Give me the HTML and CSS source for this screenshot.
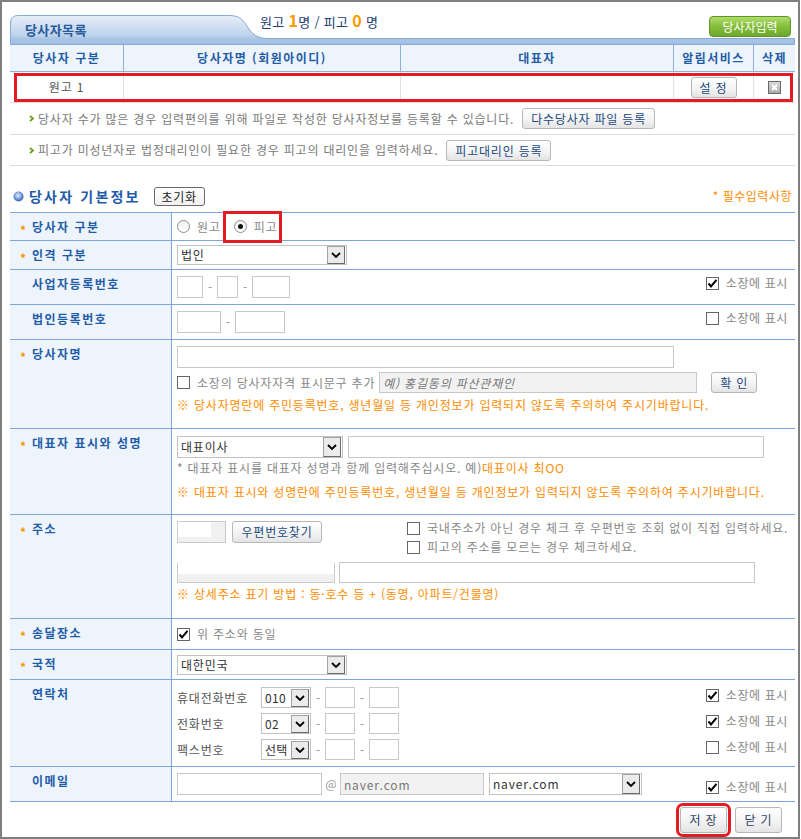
FILE: index.html
```html
<!DOCTYPE html>
<html lang="ko">
<head>
<meta charset="utf-8">
<title>당사자목록</title>
<link rel="stylesheet" href="styles.css">
</head>
<body>
<div class="window">

  <!-- list tab + counts -->
  <div class="list-head">
    <svg class="tab-bg" width="785" height="31" viewBox="0 0 785 31">
      <defs>
        <linearGradient id="tabFill" x1="0" y1="0" x2="0" y2="1">
          <stop offset="0" stop-color="#e6eff9"/>
          <stop offset="0.7" stop-color="#bcd2eb"/>
          <stop offset="0.78" stop-color="#aac6e6"/>
          <stop offset="1" stop-color="#a0bee2"/>
        </linearGradient>
      </defs>
      <path d="M0.5 30.5 V9 Q0.5 1.5 8 1.5 H219 C230 1.5 233 6 237 12 C242 20 247 24.5 258 24.5 H784.5 V30.5 Z" fill="url(#tabFill)" stroke="#87aad6"/>
    </svg>
    <span class="tab-title">당사자목록</span>
    <span class="counts">원고 <b>1</b>명 / 피고 <b>0</b> 명</span>
    <button class="btn-green">당사자입력</button>
  </div>

  <!-- party list -->
  <div class="plist">
    <div class="plist-head">
      <div>당사자 구분</div>
      <div>당사자명 (회원아이디)</div>
      <div>대표자</div>
      <div>알림서비스</div>
      <div>삭제</div>
    </div>
    <div class="plist-row">
      <div class="who">원고 1</div>
      <div></div>
      <div></div>
      <div><button class="btn btn-small">설 정</button></div>
      <div>
        <svg class="del-icon" width="13" height="13" viewBox="0 0 13 13">
          <defs>
            <linearGradient id="delFill" x1="0" y1="0" x2="0" y2="1">
              <stop offset="0" stop-color="#dcdcdc"/>
              <stop offset="1" stop-color="#a8a8a8"/>
            </linearGradient>
          </defs>
          <rect x="0.5" y="0.5" width="12" height="12" fill="url(#delFill)" stroke="#6a6a6a"/>
          <path d="M4 4 L9 9 M9 4 L4 9" stroke="#fff" stroke-width="2"/>
        </svg>
      </div>
      <span class="mark-row"></span>
    </div>
  </div>

  <!-- notices -->
  <ul class="notices">
    <li>
      <svg class="chev" width="5" height="7" viewBox="0 0 5 7"><polyline points="1,1 4,3.5 1,6" fill="none" stroke="#6fa52a" stroke-width="2"/></svg>
      당사자 수가 많은 경우 입력편의를 위해 파일로 작성한 당사자정보를 등록할 수 있습니다.
      <button class="btn">다수당사자 파일 등록</button>
    </li>
    <li>
      <svg class="chev" width="5" height="7" viewBox="0 0 5 7"><polyline points="1,1 4,3.5 1,6" fill="none" stroke="#6fa52a" stroke-width="2"/></svg>
      피고가 미성년자로 법정대리인이 필요한 경우 피고의 대리인을 입력하세요.
      <button class="btn">피고대리인 등록</button>
    </li>
  </ul>

  <!-- section title -->
  <div class="section-head">
    <svg class="bullet" width="11" height="11" viewBox="0 0 11 11">
      <defs>
        <radialGradient id="ball" cx="0.45" cy="0.4" r="0.6">
          <stop offset="0" stop-color="#e4efff"/>
          <stop offset="0.45" stop-color="#8fb3e6"/>
          <stop offset="1" stop-color="#2f5eae"/>
        </radialGradient>
      </defs>
      <circle cx="5.5" cy="5.5" r="5" fill="url(#ball)"/>
    </svg>
    <h2 class="section-title">당사자 기본정보</h2>
    <button class="btn btn-reset">초기화</button>
    <span class="required-note">* 필수입력사항</span>
  </div>

  <!-- party form -->
  <div class="form">

    <div class="frow r-type">
      <div class="flabel"><span class="req">*</span>당사자 구분</div>
      <div class="fcell mid">
        <label class="opt"><span class="radio"></span>원고</label>
        <label class="opt picked"><span class="radio on"></span>피고</label>
      </div>
    </div>

    <div class="frow r-kind">
      <div class="flabel"><span class="req">*</span>인격 구분</div>
      <div class="fcell mid">
        <span class="select s-wide"><span class="value">법인</span><span class="arrow"><svg width="10" height="6" viewBox="0 0 10 6"><polyline points="1,1 5,5 9,1" fill="none" stroke="#000" stroke-width="1.8"/></svg></span></span>
      </div>
    </div>

    <div class="frow r-biz">
      <div class="flabel">사업자등록번호</div>
      <div class="fcell">
        <input class="field w26"><span class="dash">-</span><input class="field w21"><span class="dash">-</span><input class="field w38">
        <span class="show-opt"><span class="cb on"><svg width="11" height="11" viewBox="0 0 11 11"><polyline points="1.5,5.5 4,8.5 9.5,1.8" fill="none" stroke="#000" stroke-width="2"/></svg></span>소장에 표시</span>
      </div>
    </div>

    <div class="frow r-corp">
      <div class="flabel">법인등록번호</div>
      <div class="fcell">
        <input class="field w44"><span class="dash">-</span><input class="field w50">
        <span class="show-opt"><span class="cb"></span>소장에 표시</span>
      </div>
    </div>

    <div class="frow r-name">
      <div class="flabel"><span class="req">*</span>당사자명</div>
      <div class="fcell stack">
        <input class="field w497">
        <div class="line qual">
          <span class="cb"></span>
          <span class="qual-text">소장의 당사자자격 표시문구 추가</span>
          <input class="field grey w318" placeholder="예) 홍길동의 파산관재인">
          <button class="btn btn-small">확 인</button>
        </div>
        <p class="warn">※ 당사자명란에 주민등록번호, 생년월일 등 개인정보가 입력되지 않도록 주의하여 주시기바랍니다.</p>
      </div>
    </div>

    <div class="frow r-rep">
      <div class="flabel"><span class="req">*</span>대표자 표시와 성명</div>
      <div class="fcell stack">
        <div class="line">
          <span class="select s-rep"><span class="value">대표이사</span><span class="arrow"><svg width="10" height="6" viewBox="0 0 10 6"><polyline points="1,1 5,5 9,1" fill="none" stroke="#000" stroke-width="1.8"/></svg></span></span>
          <input class="field w416 gap5">
        </div>
        <p class="hint">* 대표자 표시를 대표자 성명과 함께 입력해주십시오. 예)<span class="orange">대표이사 최OO</span></p>
        <p class="warn warn-rep">※ 대표자 표시와 성명란에 주민등록번호, 생년월일 등 개인정보가 입력되지 않도록 주의하여 주시기바랍니다.</p>
      </div>
    </div>

    <div class="frow r-addr">
      <div class="flabel"><span class="req">*</span>주소</div>
      <div class="fcell stack">
        <div class="line addr-top">
          <span class="zip"></span>
          <button class="btn btn-zip">우편번호찾기</button>
          <div class="addr-checks">
            <span class="check-line"><span class="cb"></span>국내주소가 아닌 경우 체크 후 우편번호 조회 없이 직접 입력하세요.</span>
            <span class="check-line"><span class="cb"></span>피고의 주소를 모르는 경우 체크하세요.</span>
          </div>
        </div>
        <div class="line addr-lines">
          <span class="addr-base"></span>
          <input class="field addr-detail">
        </div>
        <p class="warn warn-addr">※ 상세주소 표기 방법 : 동·호수 등 + (동명, 아파트/건물명)</p>
      </div>
    </div>

    <div class="frow r-send">
      <div class="flabel"><span class="req">*</span>송달장소</div>
      <div class="fcell mid">
        <span class="cb on"><svg width="11" height="11" viewBox="0 0 11 11"><polyline points="1.5,5.5 4,8.5 9.5,1.8" fill="none" stroke="#000" stroke-width="2"/></svg></span>
        <span class="cb-text">위 주소와 동일</span>
      </div>
    </div>

    <div class="frow r-nation">
      <div class="flabel"><span class="req">*</span>국적</div>
      <div class="fcell mid">
        <span class="select s-wide"><span class="value">대한민국</span><span class="arrow"><svg width="10" height="6" viewBox="0 0 10 6"><polyline points="1,1 5,5 9,1" fill="none" stroke="#000" stroke-width="1.8"/></svg></span></span>
      </div>
    </div>

    <div class="frow r-contact">
      <div class="flabel">연락처</div>
      <div class="fcell stack phones">
        <div class="phone-line">
          <span class="ph-label">휴대전화번호</span>
          <span class="select s-phone"><span class="value">010</span><span class="arrow"><svg width="10" height="6" viewBox="0 0 10 6"><polyline points="1,1 5,5 9,1" fill="none" stroke="#000" stroke-width="1.8"/></svg></span></span>
          <span class="dash">-</span><input class="field w30"><span class="dash">-</span><input class="field w30">
          <span class="show-opt"><span class="cb on"><svg width="11" height="11" viewBox="0 0 11 11"><polyline points="1.5,5.5 4,8.5 9.5,1.8" fill="none" stroke="#000" stroke-width="2"/></svg></span>소장에 표시</span>
        </div>
        <div class="phone-line">
          <span class="ph-label">전화번호</span>
          <span class="select s-phone"><span class="value">02</span><span class="arrow"><svg width="10" height="6" viewBox="0 0 10 6"><polyline points="1,1 5,5 9,1" fill="none" stroke="#000" stroke-width="1.8"/></svg></span></span>
          <span class="dash">-</span><input class="field w30"><span class="dash">-</span><input class="field w30">
          <span class="show-opt"><span class="cb on"><svg width="11" height="11" viewBox="0 0 11 11"><polyline points="1.5,5.5 4,8.5 9.5,1.8" fill="none" stroke="#000" stroke-width="2"/></svg></span>소장에 표시</span>
        </div>
        <div class="phone-line">
          <span class="ph-label">팩스번호</span>
          <span class="select s-phone"><span class="value">선택</span><span class="arrow"><svg width="10" height="6" viewBox="0 0 10 6"><polyline points="1,1 5,5 9,1" fill="none" stroke="#000" stroke-width="1.8"/></svg></span></span>
          <span class="dash">-</span><input class="field w30"><span class="dash">-</span><input class="field w30">
          <span class="show-opt"><span class="cb"></span>소장에 표시</span>
        </div>
      </div>
    </div>

    <div class="frow r-mail">
      <div class="flabel">이메일</div>
      <div class="fcell">
        <input class="field w145">
        <span class="at">@</span>
        <input class="field grey w144" value="naver.com">
        <span class="select s-mail"><span class="value">naver.com</span><span class="arrow"><svg width="10" height="6" viewBox="0 0 10 6"><polyline points="1,1 5,5 9,1" fill="none" stroke="#000" stroke-width="1.8"/></svg></span></span>
        <span class="show-opt mail-opt"><span class="cb on"><svg width="11" height="11" viewBox="0 0 11 11"><polyline points="1.5,5.5 4,8.5 9.5,1.8" fill="none" stroke="#000" stroke-width="2"/></svg></span>소장에 표시</span>
      </div>
    </div>

  </div>

  <div class="actions">
    <button class="btn btn-act marked">저 장</button>
    <button class="btn btn-act">닫 기</button>
  </div>

</div>
</body>
</html>
```

FILE: styles.css
```css
* {
  box-sizing: border-box;
}

html,
body {
  margin: 0;
  background: #fff;
}

body {
  font-family: "Noto Sans CJK KR", "Noto Sans", sans-serif;
  font-size: 12px;
  color: #888;
  line-height: 14px;
  letter-spacing: 0.8px;
}

button,
input {
  font-family: inherit;
  font-size: 12px;
  letter-spacing: inherit;
  margin: 0;
}

p,
h2 {
  margin: 0;
}

.window {
  width: 800px;
  height: 839px;
  border: 2px solid #7f7f7f;
  padding: 0 3px 0 8px;
}

/* ---- list tab ---- */
.list-head {
  position: relative;
  height: 43px;
  display: flex;
  align-items: flex-start;
  padding: 0 4px 0 15px;
}

.tab-bg {
  position: absolute;
  left: 0;
  top: 12px;
}

.tab-title,
.counts,
.btn-green {
  position: relative;
}

.tab-title {
  margin-top: 21px;
  width: 235px;
  font-size: 13px;
  font-weight: bold;
  color: #2a5b9c;
  letter-spacing: 0.4px;
}

.counts {
  margin-top: 10px;
  font-size: 13px;
  line-height: 16px;
  color: #1d3e70;
  letter-spacing: 0.3px;
}

.counts b {
  color: #ff9900;
  font-size: 16px;
}

.btn-green {
  margin-left: auto;
  margin-top: 14px;
  width: 82px;
  height: 21px;
  padding: 0;
  border: 1px solid #5d9627;
  border-radius: 4px;
  background: linear-gradient(#b0dc6b, #84be3b 50%, #6da92c);
  color: #fff;
  line-height: 19px;
  letter-spacing: 0;
}

/* ---- party list ---- */
.plist-head,
.plist-row {
  display: grid;
  grid-template-columns: 113px 277px 273px 80px 42px;
}

.plist-head {
  height: 27px;
  background: #eef4fb;
  border-bottom: 1px solid #8db0dc;
}

.plist-head > div {
  border-left: 1px solid #8db0dc;
  text-align: center;
  line-height: 26px;
  font-weight: bold;
  color: #1f5ca8;
  letter-spacing: 1.5px;
}

.plist-row {
  position: relative;
  height: 31px;
  border-bottom: 1px solid #dedede;
}

.plist-row > div {
  border-left: 1px solid #e2e2e2;
  display: flex;
  align-items: center;
  justify-content: center;
}

.plist-head > div:first-child,
.plist-row > div:first-child {
  border-left: 0;
}

.who {
  color: #555;
}

.mark-row {
  position: absolute;
  left: 4px;
  right: 2px;
  top: 1px;
  bottom: 0;
  border: 3px solid #e41b23;
}

/* ---- buttons ---- */
.btn {
  height: 21px;
  padding: 0 9px;
  border: 1px solid #b7b7b7;
  border-radius: 3px;
  background: linear-gradient(#ffffff, #f5f5f5 50%, #e4e4e4);
  color: #21497f;
  line-height: 19px;
  white-space: nowrap;
}

.btn-small {
  width: 46px;
  padding: 0;
}

/* ---- notices ---- */
.notices {
  list-style: none;
  margin: 0;
  padding: 0;
}

.notices li {
  display: flex;
  align-items: center;
  height: 31px;
  padding-left: 19px;
  border-bottom: 1px solid #dcdcdc;
  color: #7a7a7a;
  white-space: nowrap;
}

.notices li:first-child {
  height: 32px;
}

.chev {
  margin-right: 4px;
  flex: none;
}

.notices .btn {
  margin-left: 8px;
  padding: 0 8px;
}

/* ---- section title ---- */
.section-head {
  display: flex;
  align-items: center;
  height: 46px;
  padding: 20px 3px 6px 3px;
}

.bullet {
  flex: none;
}

.section-title {
  margin-left: 5px;
  font-size: 14px;
  font-weight: bold;
  color: #1f5ca8;
  letter-spacing: 2.2px;
  line-height: 16px;
}

.btn-reset {
  margin-left: 13px;
  width: 51px;
  height: 19px;
  padding: 0;
  border-color: #6a6a6a;
  color: #222;
  line-height: 17px;
  background: linear-gradient(#fff, #f1f1f1);
}

.required-note {
  margin-left: auto;
  color: #ff8c00;
  letter-spacing: 0.5px;
}

/* ---- form ---- */
.form {
  border-top: 1px solid #7ea6dc;
}

.frow {
  display: grid;
  grid-template-columns: 162px 1fr;
  border-bottom: 1px solid #7ea6dc;
}

.r-type { height: 28px; }
.r-kind { height: 29px; }
.r-biz { height: 35px; }
.r-corp { height: 35px; }
.r-name { height: 89px; }
.r-rep { height: 86px; }
.r-addr { height: 104px; }
.r-send { height: 31px; }
.r-nation { height: 30px; }
.r-contact { height: 87px; }
.r-mail { height: 35px; }

.flabel {
  background: #eef4fb;
  border-right: 1px solid #7ea6dc;
  padding: 7px 0 0 22px;
  font-weight: bold;
  color: #1f5ca8;
  letter-spacing: 1.5px;
  white-space: nowrap;
}

.req {
  display: inline-block;
  width: 12px;
  margin-left: -12px;
  color: #f39800;
  vertical-align: -3px;
}

.fcell {
  display: flex;
  align-items: flex-start;
  padding: 6px 7px 0 5px;
  white-space: nowrap;
}

.fcell.mid {
  align-items: center;
  padding-top: 0;
}

.fcell.stack {
  flex-direction: column;
  align-items: stretch;
}

.r-rep .fcell {
  padding-top: 7px;
}

.line {
  display: flex;
  align-items: center;
}

/* fields */
.field {
  height: 22px;
  padding: 0 3px;
  border: 1px solid #c8c8c8;
  background: #fff;
  color: #555;
  outline: none;
}

.field.grey {
  background: #f2f2f2;
  color: #777;
}

.field::placeholder {
  color: #777;
  font-style: italic;
}

.w21 { width: 21px; }
.w26 { width: 26px; }
.w30 { width: 30px; height: 21px; }
.w38 { width: 38px; }
.w44 { width: 44px; }
.w50 { width: 50px; }
.w144 { width: 144px; }
.w145 { width: 145px; }
.w318 { width: 318px; height: 21px; }
.w416 { width: 416px; }
.w497 { width: 497px; flex: none; }

.gap5 {
  margin-left: 5px;
}

.dash {
  width: 14px;
  text-align: center;
  color: #999;
  line-height: 22px;
  letter-spacing: 0;
}

/* fake selects */
.select {
  display: inline-flex;
  align-items: center;
  height: 20px;
  padding: 0 1px 0 3px;
  border: 1px solid #c2c2c2;
  background: #fff;
  color: #333;
}

.select .value {
  flex: 1;
}

.select .arrow {
  width: 18px;
  height: 18px;
  display: flex;
  align-items: center;
  justify-content: center;
  border: 1px solid;
  border-color: #a3a3a3 #6b6b6b #6b6b6b #a3a3a3;
  background: #ebebeb;
}

.s-wide { width: 170px; }
.s-rep { width: 166px; height: 22px; }
.s-phone { width: 50px; height: 21px; }
.s-mail { width: 153px; height: 22px; margin-left: 5px; }

.s-phone .value {
  letter-spacing: 0.3px;
}

.s-rep .arrow,
.s-mail .arrow {
  height: 20px;
}

/* radios and checkboxes */
.opt {
  display: inline-flex;
  align-items: center;
  gap: 7px;
  height: 26px;
  color: #888;
}

.opt.picked {
  margin-left: 5px;
  padding: 0 2px 0 8px;
  outline: 3px solid #e41b23;
}

.radio {
  width: 13px;
  height: 13px;
  border: 1px solid #8c8c8c;
  border-radius: 50%;
  background: linear-gradient(#f2f2f2, #fff);
  display: inline-flex;
  align-items: center;
  justify-content: center;
}

.radio.on::after {
  content: "";
  width: 5px;
  height: 5px;
  border-radius: 50%;
  background: #111;
}

.cb {
  flex: none;
  width: 13px;
  height: 13px;
  border: 1px solid #666;
  background: #fff;
  display: inline-flex;
  align-items: center;
  justify-content: center;
}

.show-opt {
  margin-left: auto;
  display: flex;
  align-items: center;
  gap: 7px;
  height: 14px;
  color: #888;
  letter-spacing: 0.6px;
}

.cb-text {
  margin-left: 7px;
  color: #888;
}

/* name row */
.qual {
  margin-top: 4px;
}

.qual-text {
  margin: 0 4px 0 7px;
}

.qual .btn {
  margin-left: 14px;
}

.warn {
  margin-top: 5px;
  color: #ff8c00;
}

.hint {
  margin-top: 3px;
  color: #888;
}

.orange {
  color: #ff8c00;
}

.warn-rep {
  margin-top: 10px;
}

/* address row */
.addr-top {
  align-items: flex-start;
}

.zip {
  width: 49px;
  height: 22px;
  border: 1px solid #cbcbcb;
  background: linear-gradient(#fff, #fff) no-repeat 0 0 / 33px 15px, #f1f1f1;
}

.btn-zip {
  margin-left: 6px;
  width: 90px;
  height: 22px;
  line-height: 20px;
  padding: 0;
}

.addr-checks {
  margin-left: 85px;
  display: flex;
  flex-direction: column;
  gap: 5px;
}

.check-line {
  display: flex;
  align-items: center;
  gap: 7px;
  color: #888;
}

.addr-lines {
  margin-top: 8px;
}

.addr-base {
  width: 158px;
  height: 21px;
  border: 1px solid #cbcbcb;
  border-top-color: #fff;
  background: linear-gradient(#fff 60%, #f1f1f1 60%);
}

.addr-detail {
  width: 416px;
  height: 21px;
  margin-left: 4px;
}

.warn-addr {
  margin-top: 4px;
}

/* contact row */
.phones {
  padding-top: 7px;
  gap: 5px;
}

.phone-line {
  display: flex;
  align-items: center;
  height: 21px;
}

.ph-label {
  width: 84px;
  color: #555;
}

.phone-line .show-opt {
  align-self: flex-start;
  margin-top: 1px;
}

/* email row */
.at {
  width: 18px;
  text-align: center;
  color: #999;
  line-height: 22px;
  letter-spacing: 0;
}

.mail-opt {
  align-self: center;
}

/* ---- bottom actions ---- */
.actions {
  display: flex;
  justify-content: flex-end;
  gap: 8px;
  padding: 5px 13px 0 0;
}

.btn-act {
  width: 47px;
  height: 26px;
  padding: 0;
  line-height: 24px;
  color: #2d4466;
}

.marked {
  outline: 3px solid #e41b23;
  outline-offset: 1px;
}
```
